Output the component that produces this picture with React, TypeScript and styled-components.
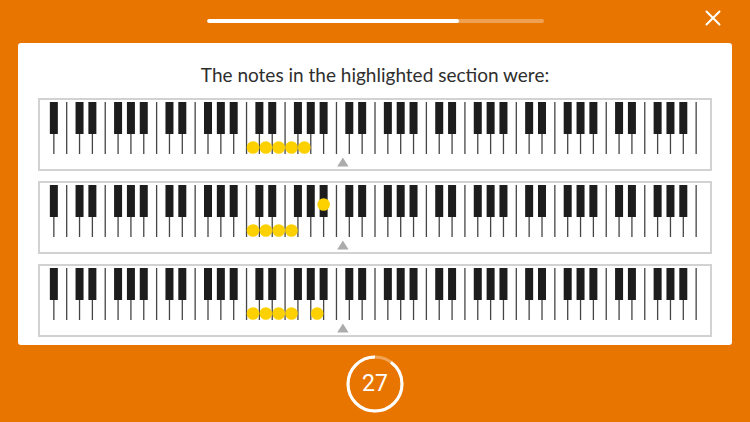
import React from "react";
import styled, { createGlobalStyle } from "styled-components";

const GlobalStyle = createGlobalStyle`
  html, body { margin: 0; padding: 0; background: #e87500; }
  * { box-sizing: border-box; }
`;

const Page = styled.div`
  width: 750px;
  height: 422px;
  background: #e87500;
  display: flex;
  flex-direction: column;
  font-family: "Lato", "Noto Sans", sans-serif;
  overflow: hidden;
`;

const TopBar = styled.div`
  height: 43px;
  display: grid;
  grid-template-columns: 1fr 337px 1fr;
  align-items: center;
`;

const Progress = styled.div`
  grid-column: 2;
  height: 4px;
  border-radius: 2px;
  background: rgba(255, 255, 255, 0.32);
  margin-top: -1px;
  overflow: hidden;
`;

const ProgressFill = styled.div`
  height: 100%;
  background: #ffffff;
  border-radius: 2px;
`;

const CloseButton = styled.button`
  grid-column: 3;
  justify-self: end;
  margin-right: 29px;
  margin-top: -7px;
  width: 16px;
  height: 16px;
  padding: 0;
  border: none;
  background: transparent;
  display: flex;
  align-items: center;
  justify-content: center;
  cursor: pointer;
`;

const Card = styled.div`
  margin: 0 18px;
  height: 302px;
  background: #ffffff;
  border-radius: 3px;
  padding: 0 20px 8px 20px;
  display: flex;
  flex-direction: column;
`;

const Title = styled.div`
  padding-top: 21px;
  height: 55px;
  line-height: 22px;
  font-size: 19px;
  color: #2e2e2e;
  text-align: center;
`;

const Rows = styled.div`
  display: flex;
  flex-direction: column;
  gap: 10px;
`;

const KeyboardBox = styled.div`
  height: 73px;
  border: 2px solid #d2d2d2;
  display: flex;
`;

const Footer = styled.div`
  flex: 1;
  display: flex;
  align-items: center;
  justify-content: center;
`;

const Timer = styled.div`
  position: relative;
  width: 60px;
  height: 60px;
  display: flex;
  align-items: center;
  justify-content: center;
`;

const TimerRing = styled.svg`
  position: absolute;
  inset: 0;
`;

const TimerText = styled.span`
  position: relative;
  color: #ffffff;
  font-family: "Roboto", "Noto Sans", sans-serif;
  font-weight: 400;
  font-size: 23px;
  line-height: 1;
`;

const WIDTH = 670;
const HEIGHT = 69;
const X0 = 1;
const NUM_WHITE = 52;
const W = 668 / NUM_WHITE;
const NAMES = ["A", "B", "C", "D", "E", "F", "G"];
const HAS_SHARP = new Set(["C", "D", "F", "G", "A"]);
const MIDDLE_C = 23;

type Note = { kind: "white" | "black"; index: number };

const Keyboard: React.FC<{ notes: Note[] }> = ({ notes }) => {
  const lines: number[] = [];
  const blacks: number[] = [];
  for (let k = 1; k < NUM_WHITE; k++) {
    lines.push(X0 + k * W);
    const name = NAMES[(k - 1) % 7];
    if (HAS_SHARP.has(name)) blacks.push(X0 + k * W);
  }
  const mc = X0 + (MIDDLE_C + 0.5) * W;
  return (
    <svg width={WIDTH} height={HEIGHT} viewBox={`0 0 ${WIDTH} ${HEIGHT}`}>
      {lines.map((x, i) => (
        <line key={`l${i}`} x1={x} y1={2} x2={x} y2={54} stroke="#454545" strokeWidth={1.3} />
      ))}
      {blacks.map((x, i) => (
        <rect key={`b${i}`} x={x - 4} y={2} width={8} height={32} fill="#1d1d1d" />
      ))}
      <polygon points={`${mc - 5.7},66.5 ${mc + 5.7},66.5 ${mc},57.5`} fill="#acacac" />
      {notes.map((n, i) => {
        const cx = n.kind === "white" ? X0 + (n.index + 0.5) * W : X0 + n.index * W;
        const cy = n.kind === "white" ? 47.5 : 21.5;
        return <circle key={`n${i}`} cx={cx} cy={cy} r={6.3} fill="#fdd100" />;
      })}
    </svg>
  );
};

const w = (index: number): Note => ({ kind: "white", index });
const b = (index: number): Note => ({ kind: "black", index });

const ROWS: Note[][] = [
  [w(16), w(17), w(18), w(19), w(20)],
  [w(16), w(17), w(18), w(19), b(22)],
  [w(16), w(17), w(18), w(19), w(21)],
];

export default function App() {
  const progress = 0.75;
  const r = 27;
  const circ = 2 * Math.PI * r;
  const elapsed = 3 / 30;
  return (
    <>
      <GlobalStyle />
      <Page>
        <TopBar>
          <Progress>
            <ProgressFill style={{ width: `${progress * 100}%` }} />
          </Progress>
          <CloseButton aria-label="Close">
            <svg width="16" height="16" viewBox="0 0 16 16">
              <line x1="1.5" y1="1.5" x2="14.5" y2="14.5" stroke="#fff" strokeWidth="2" strokeLinecap="round" />
              <line x1="14.5" y1="1.5" x2="1.5" y2="14.5" stroke="#fff" strokeWidth="2" strokeLinecap="round" />
            </svg>
          </CloseButton>
        </TopBar>
        <Card>
          <Title>The notes in the highlighted section were:</Title>
          <Rows>
            {ROWS.map((notes, i) => (
              <KeyboardBox key={i}>
                <Keyboard notes={notes} />
              </KeyboardBox>
            ))}
          </Rows>
        </Card>
        <Footer>
          <Timer>
            <TimerRing width="60" height="60" viewBox="0 0 60 60">
              <circle cx="30" cy="30" r={r} fill="none" stroke="rgba(255,255,255,0.35)" strokeWidth="3" />
              <circle
                cx="30"
                cy="30"
                r={r}
                fill="none"
                stroke="#ffffff"
                strokeWidth="3"
                strokeDasharray={`${circ * (1 - elapsed)} ${circ}`}
                strokeDashoffset={-circ * elapsed}
                transform="rotate(-90 30 30)"
              />
            </TimerRing>
            <TimerText>27</TimerText>
          </Timer>
        </Footer>
      </Page>
    </>
  );
}
